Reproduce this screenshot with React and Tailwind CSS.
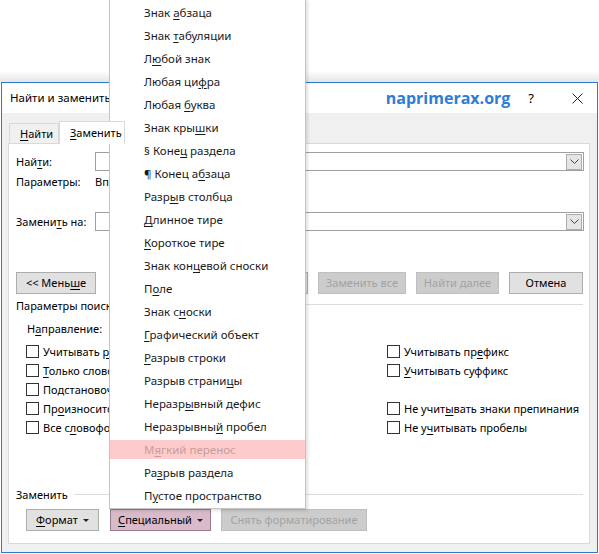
import React from "react";

const menuItems = [
  ["Знак ", "а", "бзаца"],
  ["Знак ", "т", "абуляции"],
  ["Л", "ю", "бой знак"],
  ["Любая ци", "ф", "ра"],
  ["Любая ", "б", "уква"],
  ["Знак кры", "ш", "ки"],
  ["§ Коне", "ц", " раздела"],
  ["¶ Конец а", "б", "заца"],
  ["Разр", "ы", "в столбца"],
  ["", "Д", "линное тире"],
  ["", "К", "ороткое тире"],
  ["Знак кон", "ц", "евой сноски"],
  ["П", "о", "ле"],
  ["Знак с", "н", "оски"],
  ["", "Г", "рафический объект"],
  ["", "Р", "азрыв строки"],
  ["Разрыв страни", "ц", "ы"],
  ["Неразр", "ы", "вный дефис"],
  ["Неразрывны", "й", " пробел"],
  ["М", "я", "гкий перенос", true],
  ["Ра", "з", "рыв раздела"],
  ["П", "у", "стое пространство"],
];

function Hot({ t }) {
  return (
    <span className="whitespace-pre">
      {t[0]}
      <u className="underline-offset-[2px]">{t[1]}</u>
      {t[2]}
    </span>
  );
}

function Caret() {
  return (
    <svg className="ml-[5px]" width="6" height="3" viewBox="0 0 6 3">
      <path d="M0 0 L6 0 L3 3 Z" fill="#222" />
    </svg>
  );
}

function Btn({ w, children, disabled, className = "" }) {
  return (
    <div
      className={`h-[22px] flex items-center justify-center border ${
        disabled
          ? "bg-[#cccccc] border-[#bfbfbf] text-[#a3a3a3]"
          : "bg-[#e1e1e1] border-[#adadad] text-black"
      } ${w} ${className}`}
    >
      {children}
    </div>
  );
}

function Combo() {
  return (
    <div className="flex-1 h-[19px] border border-[#a0a0a0] bg-white flex justify-end items-center pr-px">
      <div className="w-[16px] h-[16px] bg-[#e5e5e5] border border-[#adadad] flex items-center justify-center">
        <svg width="9" height="5" viewBox="0 0 9 5" fill="none" stroke="#444" strokeWidth="1">
          <path d="M0.5 0.5 L4.5 4.5 L8.5 0.5" />
        </svg>
      </div>
    </div>
  );
}

function Check({ t }) {
  return (
    <div className="h-[19px] flex items-center gap-[4px]">
      <div className="w-[13px] h-[13px] border border-[#333] bg-white shrink-0" />
      <Hot t={t} />
    </div>
  );
}

export default function App() {
  return (
    <div className="relative w-[599px] h-[554px] bg-white overflow-hidden text-[11px] leading-[16px] text-black font-['Segoe_UI','Noto_Sans',sans-serif]">
      {/* фон над окном */}
      <div className="h-[82px] bg-gradient-to-b from-white from-[86%] to-[#e6e6e6]" />

      {/* окно диалога */}
      <div className="ml-px w-[597px] h-[471px] border border-[#2b79d0] bg-[#f0f0f0] flex flex-col">
        <div className="h-[30px] bg-white flex items-center pl-[8px] pr-[14px]">
          <span className="text-[11.5px]">Найти и заменить</span>
          <span className="ml-auto text-[16px] font-bold text-[#2f7cd3] font-['Open_Sans','Noto_Sans',sans-serif]">
            naprimerax.org
          </span>
          <span className="ml-[18px] text-[13px]">?</span>
          <svg className="ml-[38px]" width="11" height="11" viewBox="0 0 11 11" stroke="#222" strokeWidth="1">
            <path d="M0.5 0.5 L10.5 10.5 M10.5 0.5 L0.5 10.5" />
          </svg>
        </div>

        <div className="pl-[6px] pt-[8px]">
          {/* вкладки */}
          <div className="flex items-end h-[22px] pl-px">
            <div className="h-[20px] w-[50px] border border-b-0 border-[#d9d9d9] bg-[#f0f0f0] flex items-center pl-[10px]">
              <Hot t={["", "Н", "айти"]} />
            </div>
            <div className="relative z-10 h-[23px] w-[66px] -mb-px border border-b-0 border-[#d9d9d9] bg-white flex items-center pl-[10px]">
              <Hot t={["", "З", "аменить"]} />
            </div>
          </div>

          {/* панель вкладки */}
          <div className="w-[582px] h-[401px] border border-[#d9d9d9] bg-white pl-[7px] pr-[5px] pt-[8px]">
            <div className="flex items-center">
              <div className="w-[79px]">
                <Hot t={["Най", "т", "и:"]} />
              </div>
              <Combo />
            </div>
            <div className="flex items-center h-[20px] mt-px">
              <div className="w-[79px]">Параметры:</div>
              <div>Вперед</div>
            </div>
            <div className="flex items-center mt-[20px]">
              <div className="w-[79px]">
                <Hot t={["Замени", "т", "ь на:"]} />
              </div>
              <Combo />
            </div>

            <div className="flex mt-[41px] pr-px">
              <Btn w="w-[80px]">
                <Hot t={["<< Мень", "ш", "е"]} />
              </Btn>
              <div className="ml-auto flex gap-[10px]">
                <Btn w="w-[80px]">
                  <Hot t={["", "З", "аменить"]} />
                </Btn>
                <Btn w="w-[88px]" disabled>Заменить все</Btn>
                <Btn w="w-[83px]" disabled>Найти далее</Btn>
                <Btn w="w-[74px]">Отмена</Btn>
              </div>
            </div>

            <div className="flex items-start mt-[4px] h-[16px] pr-px">
              <span className="whitespace-nowrap">Параметры поиска</span>
              <div className="flex-1 h-px bg-[#dcdcdc] mt-[6px] ml-[6px]" />
            </div>

            <div className="flex items-center h-[16px] mt-[7px] pl-[11px]">
              <Hot t={["Н", "а", "правление:"]} />
              <span className="ml-[20px]">Везде</span>
            </div>

            <div className="grid grid-cols-[361px_1fr] mt-[5px] pl-[10px]">
              <div>
                <Check t={["Учитывать ", "р", "егистр"]} />
                <Check t={["", "Т", "олько слово целиком"]} />
                <Check t={["Подстановочные ", "з", "наки"]} />
                <Check t={["Пр", "о", "износится как"]} />
                <Check t={["Все с", "л", "овоформы"]} />
              </div>
              <div>
                <Check t={["Учитывать пр", "е", "фикс"]} />
                <Check t={["", "У", "читывать суффикс"]} />
                <div className="h-[19px]" />
                <Check t={["Не учит", "ы", "вать знаки препинания"]} />
                <Check t={["Не у", "ч", "итывать пробелы"]} />
              </div>
            </div>

            <div className="flex items-start mt-[50px] h-[16px] pr-px">
              <span className="whitespace-nowrap">Заменить</span>
              <div className="flex-1 h-px bg-[#dcdcdc] mt-[7px] ml-[6px]" />
            </div>

            <div className="flex mt-[6px] pl-[10px]">
              <Btn w="w-[73px]">
                <Hot t={["", "Ф", "ормат"]} />
                <Caret />
              </Btn>
              <Btn w="w-[101px]" className="ml-[11px] !bg-[#d9bacb] !border-[#9a7a8c]">
                <Hot t={["", "С", "пециальный"]} />
                <Caret />
              </Btn>
              <Btn w="w-[146px]" className="ml-[10px]" disabled>
                Снять форматирование
              </Btn>
            </div>
          </div>
        </div>
      </div>

      {/* выпадающее меню «Специальный» */}
      <div className="absolute left-[109px] top-[-2px] w-[197px] border border-[#c4c4c4] bg-white pt-[2px] pb-px text-[11.5px] shadow-[2px_2px_3px_rgba(0,0,0,0.12)]">
        {menuItems.map((it, i) => (
          <div key={i} className="h-[23px] py-[2px]">
            <div
              className={`h-[19px] flex items-center pl-[34px] ${
                it[3] ? "bg-[#fdcbcb] text-[#c99c9c]" : "text-[#1a1a1a]"
              }`}
            >
              <Hot t={it} />
            </div>
          </div>
        ))}
      </div>
    </div>
  );
}
